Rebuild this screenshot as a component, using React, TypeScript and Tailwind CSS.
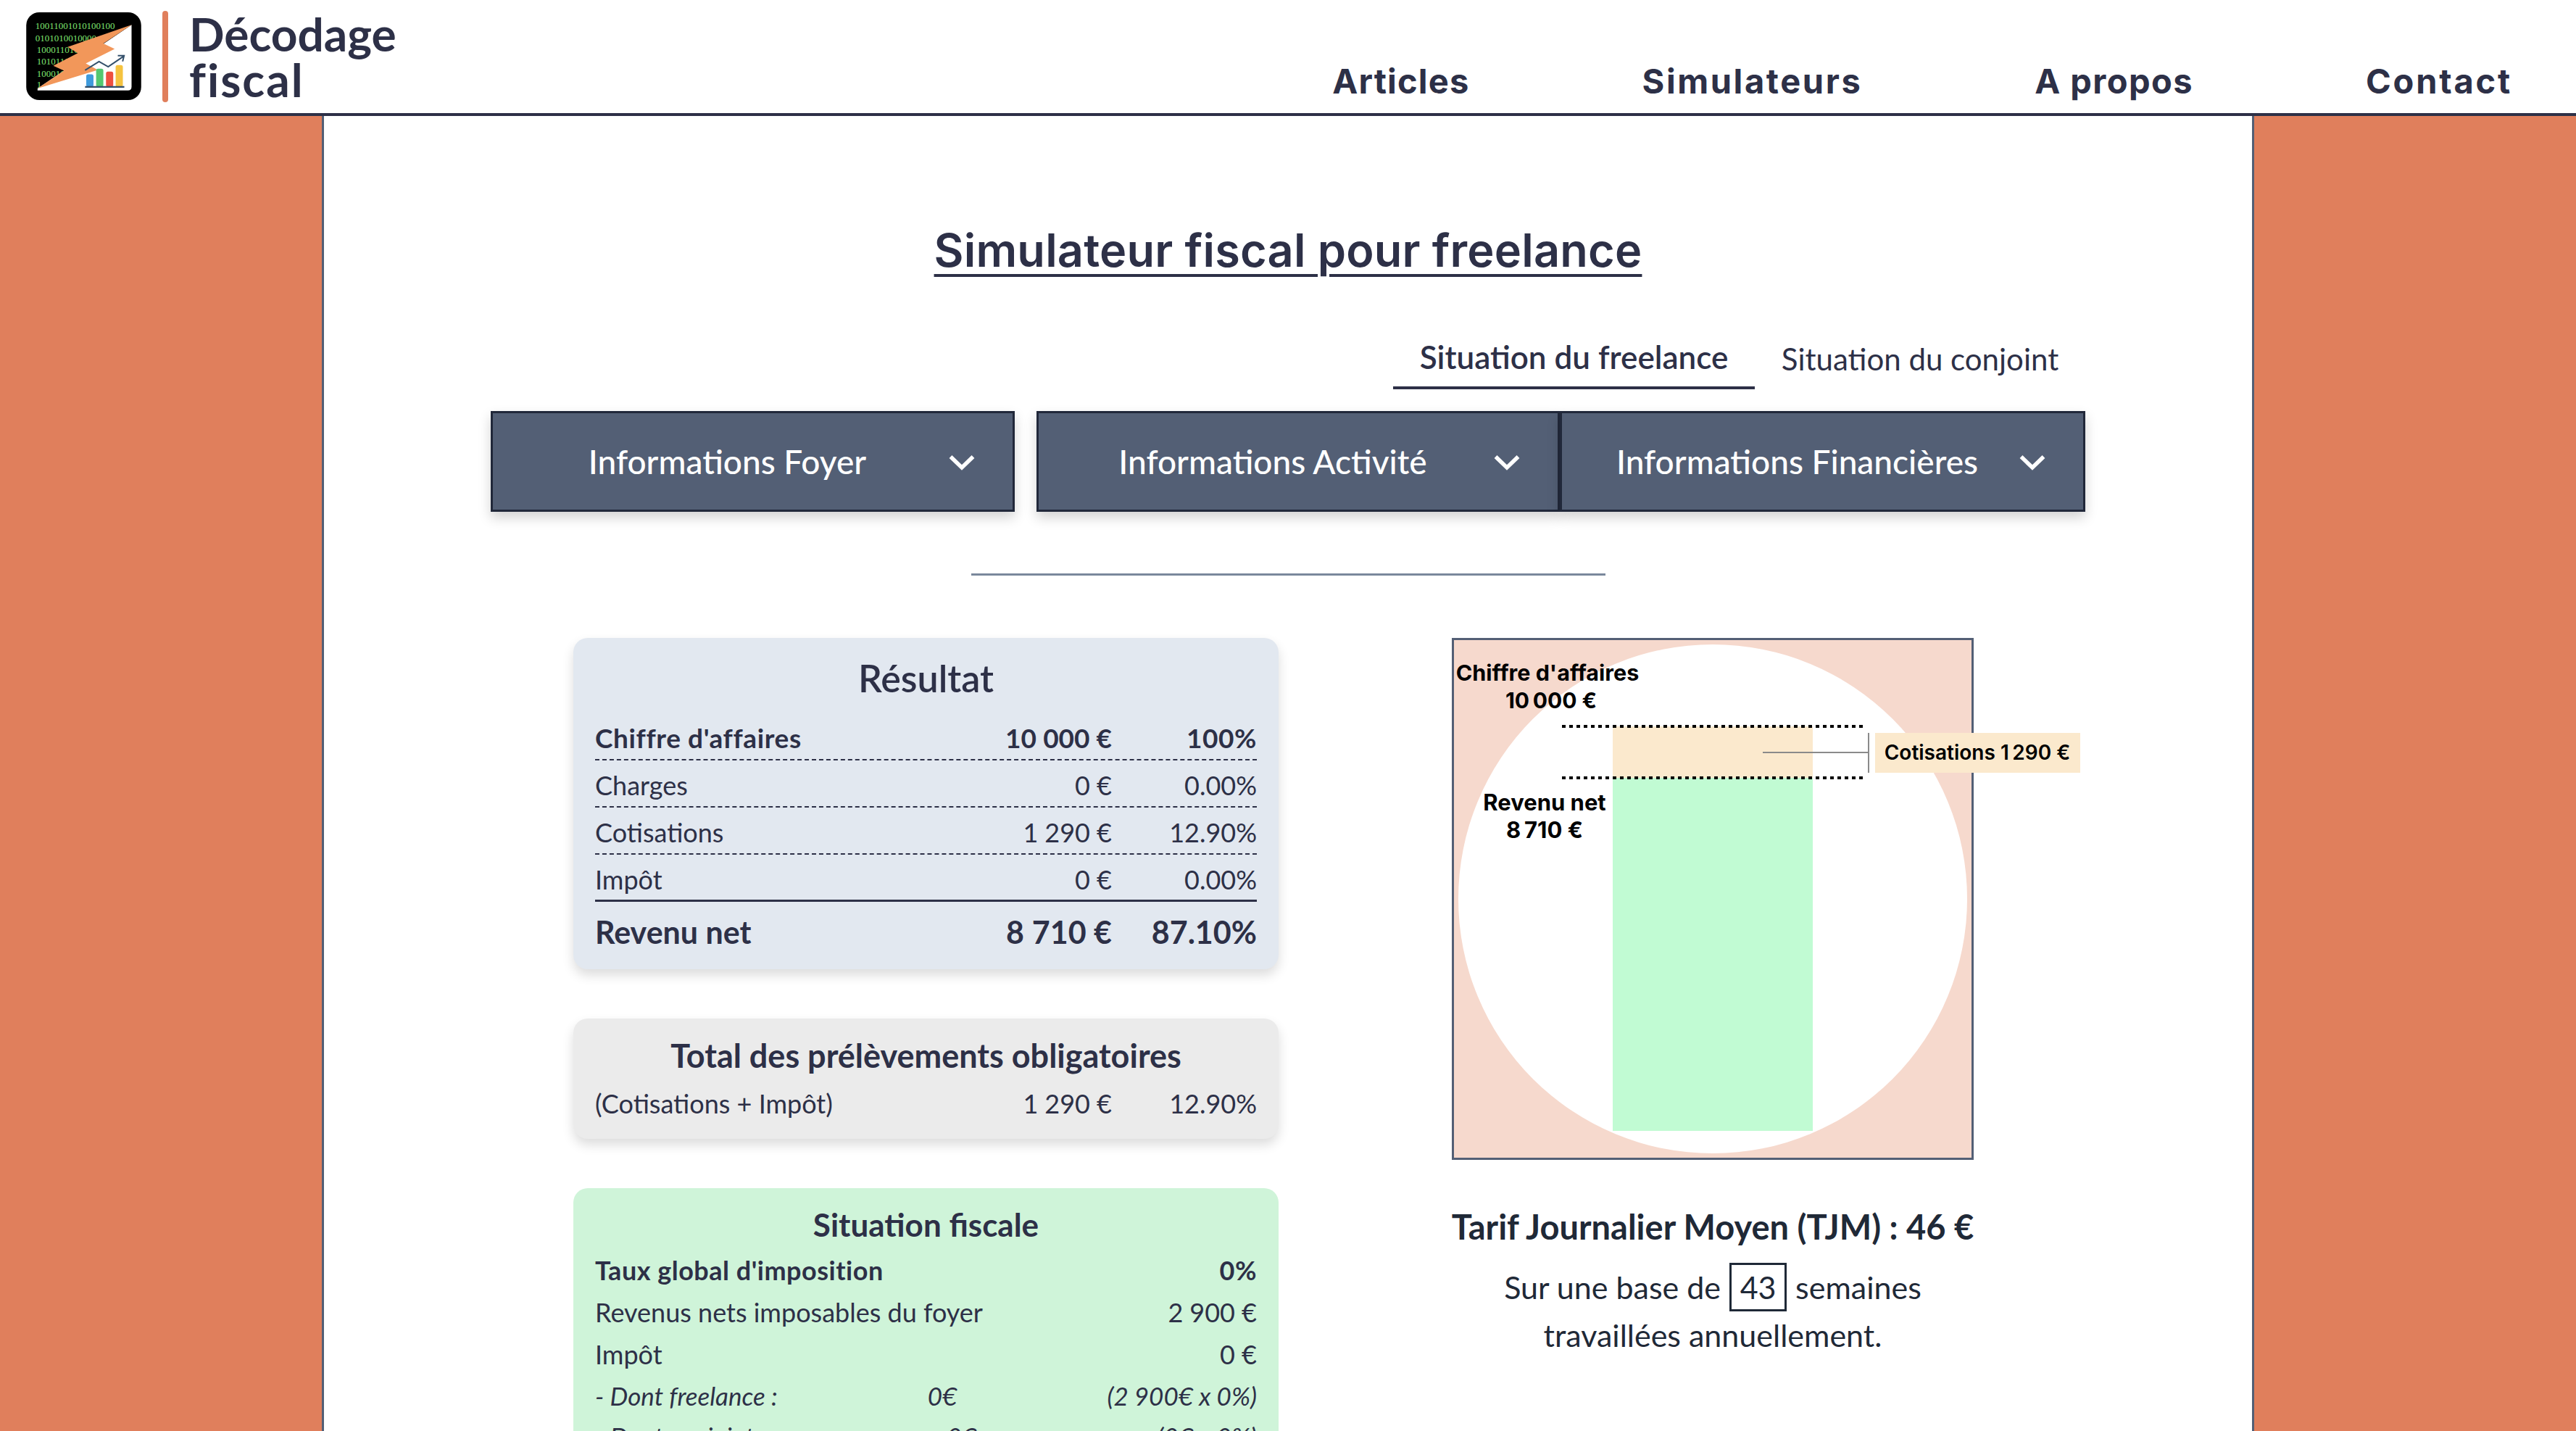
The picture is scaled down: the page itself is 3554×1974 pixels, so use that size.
function Logo() {
  return (
    <svg width="159" height="121" viewBox="48 36 477 364" className="shrink-0">
      <rect x="48" y="36" width="477" height="364" rx="54" fill="#000" />
      <path d="M485 88 L485 345 Q485 360 470 360 L95 360 L95 352 Z" fill="#fff" />
      <g fill="#7ee36e" fontFamily="'Liberation Serif', serif" fontSize="39">
        <text x="86" y="105">10011001010100100</text>
        <text x="86" y="155">0101010010000</text>
        <text x="92" y="205">10001101010</text>
        <text x="92" y="254">10101101</text>
        <text x="92" y="304">100011</text>
        <text x="92" y="349">1</text>
      </g>
      <polygon points="485,88 220,180 262,205 160,258 205,278 95,352 345,275 295,248 415,188 368,165" fill="#f2975a" />
      <rect x="297" y="293" width="30" height="52" rx="8" fill="#3f9bdc" />
      <rect x="338" y="270" width="30" height="75" rx="8" fill="#54c770" />
      <rect x="379" y="282" width="30" height="63" rx="8" fill="#ee4f3f" />
      <rect x="419" y="255" width="30" height="90" rx="8" fill="#f5c33f" />
      <rect x="292" y="342" width="163" height="7" fill="#34506b" />
      <path d="M292 276 L350 240 L388 262 L450 220 M428 216 L454 216 L448 240" fill="none" stroke="#34506b" strokeWidth="6" />
    </svg>
  )
}

function Header() {
  return (
    <header className="h-[160px] bg-white border-b-4 border-[#2d3047] flex text-[#2d3047]">
      <div className="flex items-start pl-[36px] pt-[17px]">
        <Logo />
        <div className="w-[8px] h-[126px] -mt-[2px] ml-[29px] rounded-full bg-[#e07f5c]" />
        <div className="ml-[29px] -mt-[2px] font-['Lato',sans-serif] font-bold text-[64px] leading-[63px]">
          <div>Décodage</div>
          <div className="tracking-[2px]">fiscal</div>
        </div>
      </div>
      <nav className="ml-auto self-end pb-[12px] pr-[88px] flex gap-[238px] font-['Inter',sans-serif] font-bold text-[47px] leading-[64px]">
        <a className="tracking-[1.2px]">Articles</a>
        <a className="tracking-[2.6px]">Simulateurs</a>
        <a className="tracking-[1.4px]">A propos</a>
        <a className="tracking-[2.8px]">Contact</a>
      </nav>
    </header>
  )
}

function Chevron() {
  return (
    <svg className="absolute right-[52px] top-[56px]" width="36" height="24" viewBox="0 0 36 24" fill="none">
      <path d="M2.5 4 L18 19 L33.5 4" stroke="#fff" strokeWidth="5.5" />
    </svg>
  )
}

function DropButton({ label, className }: { label: string; className: string }) {
  return (
    <button className={`relative h-[139px] bg-[#535f75] border-[3px] border-[#21283a] shadow-[0_8px_16px_rgba(0,0,0,0.18)] text-white text-[46px] pr-[70px] text-center font-['Lato',sans-serif] font-medium ${className}`}>
      {label}
      <Chevron />
    </button>
  )
}

function Row({ label, amount, pct, className }: { label: string; amount: string; pct: string; className: string }) {
  return (
    <div className={`flex items-center h-[65px] pt-[5px] ${className}`}>
      <span className="flex-1">{label}</span>
      <span>{amount}</span>
      <span className="w-[200px] text-right">{pct}</span>
    </div>
  )
}

function ResultCard() {
  return (
    <div className="h-[457px] rounded-[20px] bg-[#e2e8f0] px-[30px] pt-[26px] shadow-[0_8px_16px_rgba(0,0,0,0.14)]">
      <div className="text-center text-[52px] leading-[58px] font-semibold mb-[20px]">Résultat</div>
      <Row label="Chiffre d'affaires" amount={'10\u202f000 €'} pct="100%" className="font-bold text-[37px] tracking-[0.6px] border-b-2 border-dashed border-[#2d3047]" />
      <Row label="Charges" amount="0 €" pct="0.00%" className="border-b-2 border-dashed border-[#2d3047]" />
      <Row label="Cotisations" amount={'1\u202f290 €'} pct="12.90%" className="border-b-2 border-dashed border-[#2d3047]" />
      <Row label="Impôt" amount="0 €" pct="0.00%" className="border-b-[3px] border-solid border-[#2d3047]" />
      <Row label="Revenu net" amount={'8\u202f710 €'} pct="87.10%" className="font-bold text-[43px] h-[80px]" />
    </div>
  )
}

function TotalCard() {
  return (
    <div className="h-[166px] mt-[68px] rounded-[20px] bg-[#ebebeb] px-[30px] pt-[22px] shadow-[0_8px_16px_rgba(0,0,0,0.14)]">
      <div className="text-center text-[45px] leading-[58px] font-bold">Total des prélèvements obligatoires</div>
      <div className="flex items-center h-[60px] mt-[7px]">
        <span className="flex-1">(Cotisations + Impôt)</span>
        <span>{'1\u202f290 €'}</span>
        <span className="w-[200px] text-right">12.90%</span>
      </div>
    </div>
  )
}

function FiscalRow({ left, right, className }: { left: string; right: string; className?: string }) {
  return (
    <div className={`flex justify-between items-center h-[58px] ${className ?? ''}`}>
      <span>{left}</span>
      <span>{right}</span>
    </div>
  )
}

function DetailRow({ left, mid, right }: { left: string; mid: string; right: string }) {
  return (
    <div className="flex justify-between items-center h-[56px] italic text-[35px]">
      <span>{left}</span>
      <span>{mid}</span>
      <span>{right}</span>
    </div>
  )
}

function FiscalCard() {
  return (
    <div className="mt-[68px] rounded-[20px] bg-[#cff4d9] px-[30px] pt-[21px] pb-[30px]">
      <div className="text-center text-[44px] leading-[58px] font-bold mb-[5px]">Situation fiscale</div>
      <FiscalRow left="Taux global d'imposition" right="0%" className="font-bold tracking-[0.5px]" />
      <FiscalRow left="Revenus nets imposables du foyer" right={'2\u202f900 €'} />
      <FiscalRow left="Impôt" right="0 €" />
      <DetailRow left="- Dont freelance :" mid="0€" right={'(2\u202f900€ x 0%)'} />
      <DetailRow left="- Dont conjoint :" mid="0€" right="(0€ x 0%)" />
    </div>
  )
}

function Diagram() {
  const label = "'Inter', sans-serif"
  return (
    <svg width="867" height="720" viewBox="0 0 867 720" className="overflow-visible -mr-[147px]">
      <rect x="1.5" y="1.5" width="717" height="717" fill="#f6d9cd" stroke="#535f75" strokeWidth="3" />
      <circle cx="360" cy="360" r="351" fill="#fff" />
      <rect x="222" y="122" width="276" height="71" fill="#fbe9cd" />
      <rect x="222" y="193" width="276" height="487" fill="#c1fbd3" />
      <line x1="152" y1="122" x2="567" y2="122" stroke="#000" strokeWidth="4" strokeDasharray="5 5" />
      <line x1="152" y1="193" x2="567" y2="193" stroke="#000" strokeWidth="4" strokeDasharray="5 5" />
      <path d="M429 158 H575 M575 131 V186" fill="none" stroke="#8a8a8a" strokeWidth="2" />
      <rect x="584" y="131" width="283" height="55" fill="#fbe9cd" />
      <g fontFamily={label} fontWeight="700" fill="#000" textAnchor="middle">
        <text x="132" y="59" fontSize="30.5">Chiffre d'affaires</text>
        <text x="137" y="97" fontSize="30">{'10\u202f000 €'}</text>
        <text x="128" y="238" fontSize="31">Revenu net</text>
        <text x="128" y="276" fontSize="31">{'8\u202f710 €'}</text>
        <text x="725" y="168" fontSize="28" fontWeight="600">{'Cotisations 1\u202f290 €'}</text>
      </g>
    </svg>
  )
}

export default function App() {
  return (
    <div className="h-[1974px] overflow-hidden bg-[#e07f5c] font-['Lato',sans-serif] text-[36px] text-[#2d3047]">
      <Header />
      <main className="mx-auto w-[2666px] h-[1814px] bg-white border-x-[3px] border-[#535f75] overflow-hidden">
        <div className="w-[2200px] mx-auto">
          <h1 className="mt-[148px] text-center font-['Inter',sans-serif] font-semibold text-[63px] tracking-[0.2px] leading-[74px] underline decoration-[4px] underline-offset-[10px]">
            Simulateur fiscal pour freelance
          </h1>
          <div className="flex justify-end mt-[78px] text-[42px] leading-[58px]">
            <div className="h-[77px] w-[499px] pt-[3px] text-center text-[44px] font-semibold border-b-4 border-[#2d3047]">Situation du freelance</div>
            <div className="w-[456px] pt-[6px] text-center">Situation du conjoint</div>
          </div>
          <div className="flex mt-[30px]">
            <DropButton label="Informations Foyer" className="w-[723px] mr-[30px]" />
            <DropButton label="Informations Activité" className="w-[722px]" />
            <DropButton label="Informations Financières" className="w-[725px]" />
          </div>
          <div className="h-[3px] w-[875px] mx-auto mt-[85px] bg-[#7a889c]" />
        </div>
        <div className="flex mt-[86px] pl-[344px]">
          <div className="w-[973px] shrink-0">
            <ResultCard />
            <TotalCard />
            <FiscalCard />
          </div>
          <div className="ml-[239px] w-[720px] flex flex-col items-center">
            <Diagram />
            <div className="mt-[62px] whitespace-nowrap text-[47px] leading-[60px] font-bold text-[#1f2937]">Tarif Journalier Moyen (TJM) : 46 €</div>
            <div className="mt-[20px] text-[43px] leading-[66px] text-center text-[#1f2937] whitespace-nowrap">
              <div className="flex items-center justify-center gap-[12px]">
                <span>Sur une base de</span>
                <span className="w-[79px] h-[67px] border-[3px] border-[#1f2937] flex items-center justify-center">43</span>
                <span>semaines</span>
              </div>
              <div>travaillées annuellement.</div>
            </div>
          </div>
        </div>
      </main>
    </div>
  )
}
